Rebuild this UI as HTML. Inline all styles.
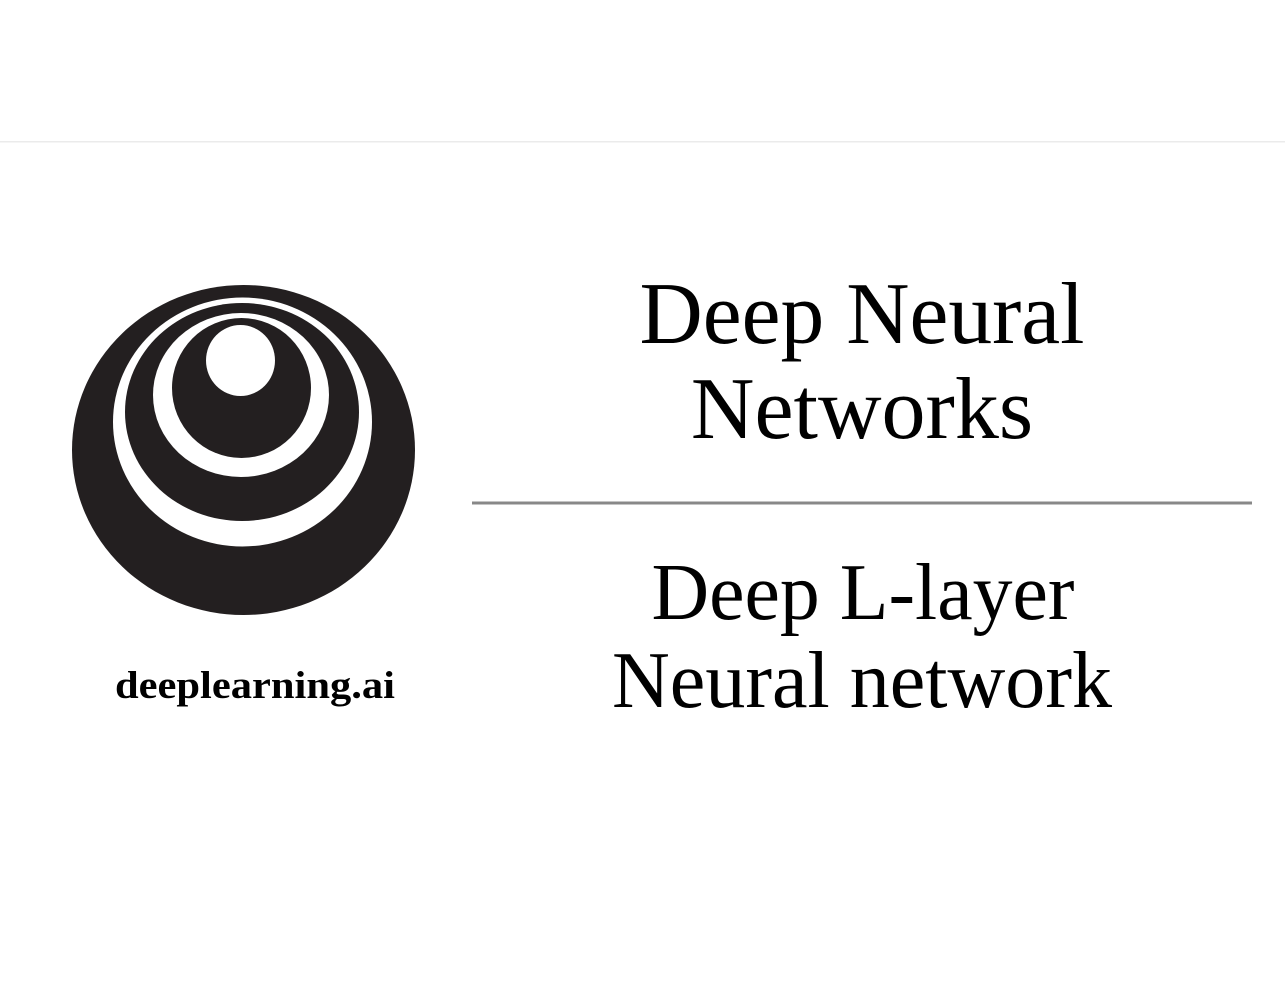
<!DOCTYPE html>
<html><head><meta charset="utf-8"><style>html,body{margin:0;padding:0;background:#fff;}svg{display:block}</style></head>
<body>
<svg width="1285" height="1000" viewBox="0 0 1285 1000" xmlns="http://www.w3.org/2000/svg">
<rect width="1285" height="1000" fill="#fff"/>
<rect x="0" y="141" width="1285" height="1.5" fill="#ebebeb"/>
<ellipse cx="243.5" cy="450" rx="171.5" ry="165" fill="#231f20"/>
<ellipse cx="242.5" cy="422" rx="129.5" ry="124.5" fill="#fff"/>
<ellipse cx="242" cy="412" rx="117" ry="109" fill="#231f20"/>
<ellipse cx="241" cy="395" rx="88" ry="82" fill="#fff"/>
<ellipse cx="241.5" cy="388" rx="69.5" ry="70" fill="#231f20"/>
<ellipse cx="240.5" cy="360.5" rx="34.5" ry="35.5" fill="#fff"/>
<text x="255" y="698" text-anchor="middle" font-family="Liberation Serif, serif" font-weight="bold" font-size="39" textLength="280" lengthAdjust="spacingAndGlyphs" fill="#000">deeplearning.ai</text>
<g font-family="Liberation Serif, serif" fill="#000" text-anchor="middle">
<text x="862" y="343" font-size="88" textLength="445" lengthAdjust="spacingAndGlyphs">Deep Neural</text>
<text x="862" y="438" font-size="88">Networks</text>
<text x="863" y="619" font-size="80" textLength="423" lengthAdjust="spacingAndGlyphs">Deep L-layer</text>
<text x="862" y="707" font-size="80" textLength="500" lengthAdjust="spacingAndGlyphs">Neural network</text>
</g>
<rect x="472" y="501.5" width="780" height="3" fill="#888"/>
</svg>
</body></html>
